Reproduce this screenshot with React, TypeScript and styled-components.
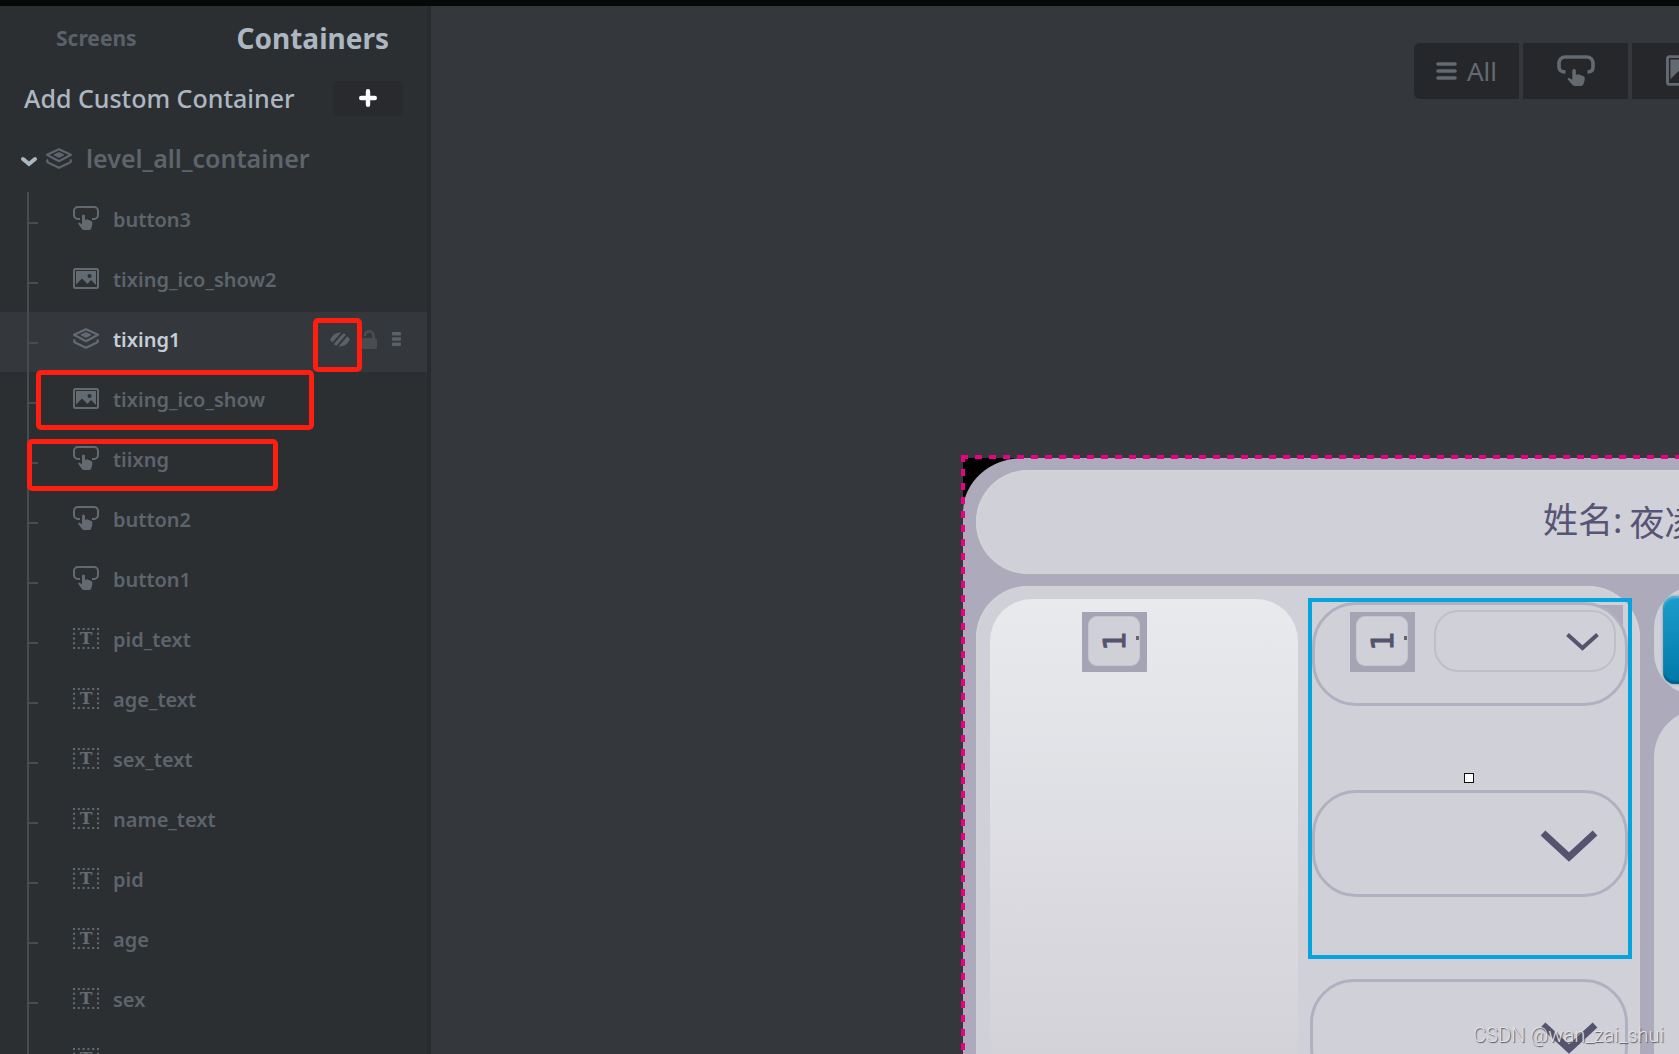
import React from 'react';
import styled, { createGlobalStyle, css } from 'styled-components';

const color = {
  sidebar: '#2b2f32',
  edge: '#2a2b2f',
  canvas: '#34373b',
  control: '#26272b',
  muted: '#636a72',
  bright: '#adb7c2',
  line: '#484c50',
  device: '#acaabb',
  surface: '#d0d0d8',
  ink: '#55536e',
  select: '#05a4de',
  guide: '#eb0083',
  mark: '#ff1e10',
};

const GlobalStyle = createGlobalStyle`
  *, *::before, *::after { box-sizing: border-box; }
  body {
    margin: 0;
    overflow: hidden;
    background: ${color.canvas};
    font-family: "Noto Sans", "Open Sans", sans-serif;
  }
  button { font: inherit; color: inherit; border: 0; padding: 0; background: none; cursor: pointer; }
  svg { display: block; flex: none; }
`;

const Page = styled.div`
  position: relative;
  display: flex;
  height: 100vh;
  overflow: hidden;
  border-top: 6px solid #070909;
`;

/* ---------- sidebar ---------- */

const Sidebar = styled.aside`
  flex: 0 0 431px;
  overflow: hidden;
  background: ${color.sidebar};
  border-right: 4px solid ${color.edge};
`;

const Tabs = styled.nav`
  display: flex;
  align-items: center;
  justify-content: space-between;
  height: 64px;
  padding: 0 38px 0 56px;
`;

const Tab = styled.button<{ $active?: boolean }>`
  font-size: ${(p) => (p.$active ? 28 : 21)}px;
  font-weight: 700;
  color: ${(p) => (p.$active ? color.bright : '#5b6168')};
`;

const AddRow = styled.div`
  display: flex;
  align-items: center;
  justify-content: space-between;
  height: 58px;
  padding: 0 24px 2px;
  font-size: 25px;
  font-weight: 500;
  color: ${color.bright};
`;

const AddButton = styled.button`
  display: grid;
  place-items: center;
  width: 70px;
  height: 35px;
  border-radius: 5px;
  background: #292a2e;
  color: #fff;
`;

const GroupRow = styled.button`
  display: flex;
  align-items: center;
  width: 100%;
  height: 64px;
  padding: 0 0 4px 20px;
  font-size: 25px;
  font-weight: 600;
  color: #5d646b;

  svg { margin-top: 6px; }
  svg + svg { margin: 0 14px 0 8px; }
`;

const Tree = styled.ul`
  position: relative;
  margin: 0;
  padding: 0;
  list-style: none;

  &::before {
    content: '';
    position: absolute;
    z-index: 1;
    top: 0;
    bottom: 0;
    left: 27px;
    width: 2px;
    background: ${color.line};
  }
`;

const Item = styled.li<{ $active?: boolean }>`
  position: relative;
  display: flex;
  align-items: center;
  gap: 14px;
  height: 60px;
  padding: 0 26px 6px 73px;
  color: ${color.muted};
  font-size: 20px;
  font-weight: 600;
  ${(p) => p.$active && css`background: ${color.canvas};`}

  & > svg { margin-bottom: 2px; }

  &::before {
    content: '';
    position: absolute;
    top: 30px;
    left: 29px;
    width: 9px;
    height: 2px;
    background: ${color.line};
  }
`;

const ItemName = styled.button<{ $active?: boolean }>`
  flex: 1;
  text-align: left;
  color: ${(p) => (p.$active ? '#c5ced8' : '#5d646b')};
`;

const ItemTools = styled.div`
  display: flex;
  align-items: center;
  gap: 12px;
`;

const ToolButton = styled.button<{ $dim?: boolean }>`
  color: ${(p) => (p.$dim ? '#494d52' : '#5a6067')};
  & + & + & { margin-left: 3px; }
`;

const Mark = styled.div<{ $x: number; $y: number; $w: number; $h: number }>`
  position: absolute;
  z-index: 5;
  left: ${(p) => p.$x}px;
  top: ${(p) => p.$y}px;
  width: ${(p) => p.$w}px;
  height: ${(p) => p.$h}px;
  border: 5px solid ${color.mark};
  border-radius: 5px;
  pointer-events: none;
`;

/* ---------- canvas ---------- */

const Workspace = styled.main`
  flex: 1;
  min-width: 0;
  overflow: hidden;
  padding-top: 37px;
  background: ${color.canvas};
`;

const Toolbar = styled.div`
  display: flex;
  justify-content: flex-end;
  gap: 4px;
  margin-right: -58px;
`;

const FilterButton = styled.button`
  display: flex;
  align-items: center;
  justify-content: center;
  gap: 10px;
  width: 105px;
  height: 56px;
  padding-bottom: 1px;
  background: ${color.control};
  color: ${color.muted};
  font-size: 26px;

  &:first-child { border-radius: 6px 0 0 6px; }
`;

const Device = styled.section`
  position: relative;
  width: 1000px;
  height: 900px;
  margin: 359px 0 0 532px;
  background: #000;

  &::before, &::after {
    content: '';
    position: absolute;
    z-index: 3;
    top: -3px;
    left: -2px;
  }
  &::before {
    width: 100%;
    height: 4px;
    background: repeating-linear-gradient(90deg, ${color.guide} 0 7px, transparent 7px 14px);
  }
  &::after {
    width: 4px;
    height: 100%;
    background: repeating-linear-gradient(180deg, ${color.guide} 0 7px, transparent 7px 14px);
  }
`;

const Screen = styled.div`
  display: flex;
  flex-direction: column;
  gap: 12px;
  height: 100%;
  padding: 12px 13px;
  border-radius: 60px 0 0 0 / 54px 0 0 0;
  background: ${color.device};
`;

const Header = styled.header`
  display: flex;
  align-items: center;
  flex: 0 0 104px;
  gap: 7px;
  padding: 2px 0 0 567px;
  border-radius: 52px;
  background: ${color.surface};
  box-shadow: inset 0 0 2px 1px #d4d4d8;
  color: #575475;
  font-family: "Noto Sans", "Noto Sans CJK SC", sans-serif;
  font-size: 35px;
  line-height: 48px;
  white-space: nowrap;
`;

const HeaderLabel = styled.span`
  padding-bottom: 6px;
`;

const Columns = styled.div`
  display: flex;
  flex: 1;
  gap: 14px;
`;

const Panel = styled.div`
  display: flex;
  flex: 0 0 664px;
  gap: 10px;
  padding: 13px 8px 0 14px;
  border-radius: 52px 52px 0 0;
  background: ${color.surface};
  box-shadow: inset 0 0 2px 1px #d4d4d8;
`;

const Sheet = styled.div`
  display: flex;
  justify-content: center;
  align-items: flex-start;
  flex: 0 0 308px;
  padding: 13px 59px 0 0;
  border-radius: 42px 42px 0 0;
  background: linear-gradient(#e9eaee, #d2d2d8 460px, #d0d0d6);
`;

const SideColumn = styled.div`
  flex: 1;
  display: flex;
  flex-direction: column;
  gap: 14px;
`;

const ActionSlot = styled.div`
  flex: 0 0 104px;
  padding: 10px 9px 6px;
  border-radius: 42px;
  background: ${color.surface};
`;

const ActionButton = styled.button`
  width: 100%;
  height: 88px;
  border-radius: 12px;
  background: linear-gradient(#1b9dcc, #0078a8);
  box-shadow: inset 0 2px 2px #5bb8da, inset 0 -3px 2px #006088, 0 0 3px #8f8fa0;
`;

const SidePanel = styled.div`
  flex: 1;
  border-radius: 48px;
  background: ${color.surface};
`;

const Badge = styled.span`
  display: block;
  width: 65px;
  height: 60px;
  padding: 4px 7px 6px 6px;
  background: #a5a4b4;
`;

const BadgeFace = styled.span`
  position: relative;
  display: grid;
  place-items: center;
  width: 52px;
  height: 50px;
  border: 1px solid #c6c6d0;
  border-radius: 9px;
  background: ${color.surface};
  color: ${color.ink};
  font-family: "DejaVu Sans", sans-serif;
  font-size: 31px;
  line-height: 32px;

  &::after {
    content: '';
    position: absolute;
    top: 19px;
    right: 0;
    width: 3px;
    height: 4px;
    background: #66666a;
  }
`;

const Turned = styled.span`
  transform: rotate(-90deg);
  -webkit-text-stroke: 1px ${color.ink};
`;

const Choices = styled.div`
  display: flex;
  flex-direction: column;
  gap: 20px;
  width: 324px;
  margin-top: -1px;
`;

const Selection = styled.div`
  position: relative;
  z-index: 0;
  display: flex;
  flex-direction: column;
  gap: 84px;
  height: 361px;
  border: 4px solid ${color.select};

  &::before {
    content: '';
    position: absolute;
    z-index: -1;
    top: 3px;
    right: 5px;
    width: 40px;
    height: 40px;
    background: ${color.device};
  }
`;

const Handle = styled.i`
  position: absolute;
  top: 171px;
  left: 152px;
  width: 10px;
  height: 10px;
  border: 1px solid #111;
  background: #fff;
`;

const Pill = styled.div`
  display: flex;
  align-items: flex-start;
  gap: 19px;
  height: 104px;
  padding: 5px 9px 0 35px;
  border: 3px solid #b2b0c0;
  border-radius: 44px;
  background: ${color.surface};
  & > ${Badge} { margin-top: 2px; }
`;

const Field = styled.label<{ $small?: boolean }>`
  position: relative;
  display: block;
  flex: ${(p) => (p.$small ? '1' : 'none')};
  height: ${(p) => (p.$small ? 62 : 107)}px;

  svg {
    position: absolute;
    top: ${(p) => (p.$small ? 23 : 40)}px;
    right: ${(p) => (p.$small ? 17 : 30)}px;
    color: ${color.ink};
    pointer-events: none;
  }
`;

const Select = styled.select<{ $small?: boolean }>`
  appearance: none;
  width: 100%;
  height: 100%;
  border: ${(p) => (p.$small ? '2px solid #bfbecb' : '3px solid #b2b0c0')};
  border-radius: ${(p) => (p.$small ? 24 : 44)}px;
  background: ${color.surface};
`;

const NextChoice = styled.div`
  padding: 0 4px 0 2px;
  ${Field} { height: 112px; }
  svg { top: 43px; }
`;

const Watermark = styled.p`
  position: absolute;
  right: 15px;
  bottom: 6px;
  z-index: 6;
  margin: 0;
  color: #e2e2e6;
  font-family: Roboto, sans-serif;
  font-size: 20px;
  font-weight: 300;
  line-height: 26px;
  text-shadow: 1px 1px 1px #55555c;
`;

/* ---------- icons ---------- */

const handPath =
  'M4 1.6a1.5 1.5 0 0 1 3 0V5l1.4.2q.6-.8 1.5-.2l.6.6q1-.5 1.7.4l.3.3q1.800-.2 1.800 1.500V10l-.9 3.500q-.3 1.900-1.700 1.900H6q-1.200 0-2-1L.3 9.500Q-.2 8 1.200 8L4 9.800Z';

const TapIcon = () => (
  <svg width="26" height="24" viewBox="0 0 26 24" fill="none">
    <path d="M7 13H5a4 4 0 0 1-4-4V5a4 4 0 0 1 4-4h16a4 4 0 0 1 4 4v4a4 4 0 0 1-4 4h-2" stroke="currentColor" strokeWidth="2" />
    <path d={handPath} transform="translate(5 8.500)" fill="currentColor" />
  </svg>
);

const TapIconLarge = () => (
  <svg width="38" height="31" viewBox="0 0 38 31" fill="none">
    <path d="M8.500 17C4 17 2 15 2 12V8a6 6 0 0 1 6-6h22a6 6 0 0 1 6 6v4c0 3-2 5-5.500 5" stroke="currentColor" strokeWidth="3.600" />
    <path d={handPath} transform="translate(10.500 14) scale(1.2 1.100)" fill="currentColor" />
  </svg>
);

const PictureIcon = ({ large }: { large?: boolean }) => (
  <svg width={large ? 38 : 26} height={large ? 31 : 21} viewBox="0 0 26 21" fill="none">
    <rect x="1" y="1" width="24" height="19" rx="1.500" stroke="currentColor" strokeWidth="2" />
    <path d="M3 3h20v14l-5-5-3.500 4L9 10.500 3 16.500Z" fill="currentColor" />
    <circle cx="16.500" cy="8" r="2" fill={large ? color.control : color.sidebar} />
  </svg>
);

const LayersIcon = () => (
  <svg width="26" height="21" viewBox="0 0 26 21" fill="none" stroke="currentColor" strokeLinejoin="round">
    <path d="M13 1.200 25 6.800 13 13.200 1 6.800Z" strokeWidth="2.200" />
    <path d="M13 4.800 17.500 6.800l-4.500 2.200L8.500 6.800Z" fill="currentColor" strokeWidth="1.400" />
    <path d="M2 11.500Q0 13.500 2.500 14.800L13 19.800l10.500-5Q26 13.500 24 11.500" strokeWidth="2.200" />
  </svg>
);

const TextIcon = () => (
  <svg width="26" height="21" viewBox="0 0 26 21">
    <path d="M0 1h26M0 20h26" stroke="currentColor" strokeWidth="2" strokeDasharray="2 2.800" />
    <path d="M1 0v21M25 0v21" stroke="currentColor" strokeWidth="2" strokeDasharray="2 2.750" />
    <text x="13" y="16" textAnchor="middle" fill="currentColor" fontFamily="DejaVu Serif, serif" fontWeight="700" fontSize="17">T</text>
  </svg>
);

const PlusIcon = () => (
  <svg width="18" height="18" viewBox="0 0 18 18" stroke="currentColor" strokeWidth="4.400" strokeLinecap="round">
    <path d="M9 2.200v13.600M2.200 9h13.600" />
  </svg>
);

const OpenIcon = () => (
  <svg width="18" height="11" viewBox="0 0 18 11" fill="none" stroke={color.bright} strokeWidth="4" strokeLinecap="round">
    <path d="m3 3 6 5 6-5" />
  </svg>
);

const BarsIcon = () => (
  <svg width="21" height="18" viewBox="0 0 21 18" stroke="currentColor" strokeWidth="3.600" strokeLinecap="round">
    <path d="M2 2h17M2 9h17M2 16h17" />
  </svg>
);

const HiddenIcon = () => (
  <svg width="20" height="15" viewBox="0 0 20 15" fill="none">
    <path d="M0 7.500Q4 .5 10 .5T20 7.500Q16 14.500 10 14.500T0 7.500Z" fill="currentColor" />
    <path d="M1 13.500 14-1M5 17 18 2" stroke={color.canvas} strokeWidth="2" />
  </svg>
);

const LockIcon = () => (
  <svg width="15" height="19" viewBox="0 0 15 19" fill="none">
    <rect y="8" width="15" height="11" rx="2" fill="currentColor" />
    <path d="M3 6V5.500a4 4 0 0 1 8.500 0V9" stroke="currentColor" strokeWidth="2.600" />
  </svg>
);

const MenuIcon = () => (
  <svg width="9" height="14" viewBox="0 0 9 14" fill="currentColor">
    <rect width="9" height="3.600" rx="1" />
    <rect y="5.200" width="9" height="3.600" rx="1" />
    <rect y="10.400" width="9" height="3.600" rx="1" />
  </svg>
);

const Chevron = ({ small }: { small?: boolean }) => (
  <svg
    width={small ? 33 : 58}
    height={small ? 18 : 33}
    viewBox={small ? '0 0 33 18' : '0 0 58 33'}
    fill="none"
    stroke="currentColor"
    strokeWidth={small ? 4 : 7}
  >
    <path d={small ? 'M1.500 1.500 16.500 15l15-13.500' : 'M3 3l26 24L55 3'} />
  </svg>
);

/* ---------- content ---------- */

type Kind = 'tap' | 'picture' | 'layers' | 'text';

const icons: Record<Kind, React.FC> = {
  tap: TapIcon,
  picture: PictureIcon,
  layers: LayersIcon,
  text: TextIcon,
};

const items: { kind: Kind; name: string; active?: boolean }[] = [
  { kind: 'tap', name: 'button3' },
  { kind: 'picture', name: 'tixing_ico_show2' },
  { kind: 'layers', name: 'tixing1', active: true },
  { kind: 'picture', name: 'tixing_ico_show' },
  { kind: 'tap', name: 'tiixng' },
  { kind: 'tap', name: 'button2' },
  { kind: 'tap', name: 'button1' },
  { kind: 'text', name: 'pid_text' },
  { kind: 'text', name: 'age_text' },
  { kind: 'text', name: 'sex_text' },
  { kind: 'text', name: 'name_text' },
  { kind: 'text', name: 'pid' },
  { kind: 'text', name: 'age' },
  { kind: 'text', name: 'sex' },
  { kind: 'text', name: '' },
];

const NumberBadge = () => (
  <Badge>
    <BadgeFace>
      <Turned>1</Turned>
    </BadgeFace>
  </Badge>
);

const Dropdown = ({ label, small }: { label: string; small?: boolean }) => (
  <Field $small={small}>
    <Select aria-label={label} $small={small} />
    <Chevron small={small} />
  </Field>
);

export default function App() {
  return (
    <Page>
      <GlobalStyle />
      <Sidebar>
        <Tabs>
          <Tab>Screens</Tab>
          <Tab $active>Containers</Tab>
        </Tabs>
        <AddRow>
          Add Custom Container
          <AddButton aria-label="Add"><PlusIcon /></AddButton>
        </AddRow>
        <GroupRow>
          <OpenIcon />
          <LayersIcon />
          level_all_container
        </GroupRow>
        <Tree>
          {items.map(({ kind, name, active }) => {
            const Icon = icons[kind];
            return (
              <Item key={name} $active={active}>
                <Icon />
                {name && <ItemName $active={active}>{name}</ItemName>}
                {active && (
                  <ItemTools>
                    <ToolButton aria-label="Show"><HiddenIcon /></ToolButton>
                    <ToolButton aria-label="Lock" $dim><LockIcon /></ToolButton>
                    <ToolButton aria-label="Menu"><MenuIcon /></ToolButton>
                  </ItemTools>
                )}
              </Item>
            );
          })}
        </Tree>
      </Sidebar>

      <Workspace>
        <Toolbar>
          <FilterButton><BarsIcon />All</FilterButton>
          <FilterButton aria-label="Buttons"><TapIconLarge /></FilterButton>
          <FilterButton aria-label="Images"><PictureIcon large /></FilterButton>
        </Toolbar>
        <Device>
          <Screen>
            <Header>
              <HeaderLabel>姓名:</HeaderLabel>
              <span>夜凌</span>
            </Header>
            <Columns>
              <Panel>
                <Sheet><NumberBadge /></Sheet>
                <Choices>
                  <Selection>
                    <Pill>
                      <NumberBadge />
                      <Dropdown label="Option 1" small />
                    </Pill>
                    <Dropdown label="Option 2" />
                    <Handle />
                  </Selection>
                  <NextChoice>
                    <Dropdown label="Option 3" />
                  </NextChoice>
                </Choices>
              </Panel>
              <SideColumn>
                <ActionSlot><ActionButton aria-label="Start" /></ActionSlot>
                <SidePanel />
              </SideColumn>
            </Columns>
          </Screen>
        </Device>
      </Workspace>

      <Mark $x={313} $y={312} $w={49} $h={54} />
      <Mark $x={36} $y={364} $w={278} $h={60} />
      <Mark $x={27} $y={433} $w={251} $h={52} />
      <Watermark>CSDN @wan_zai_shui</Watermark>
    </Page>
  );
}
